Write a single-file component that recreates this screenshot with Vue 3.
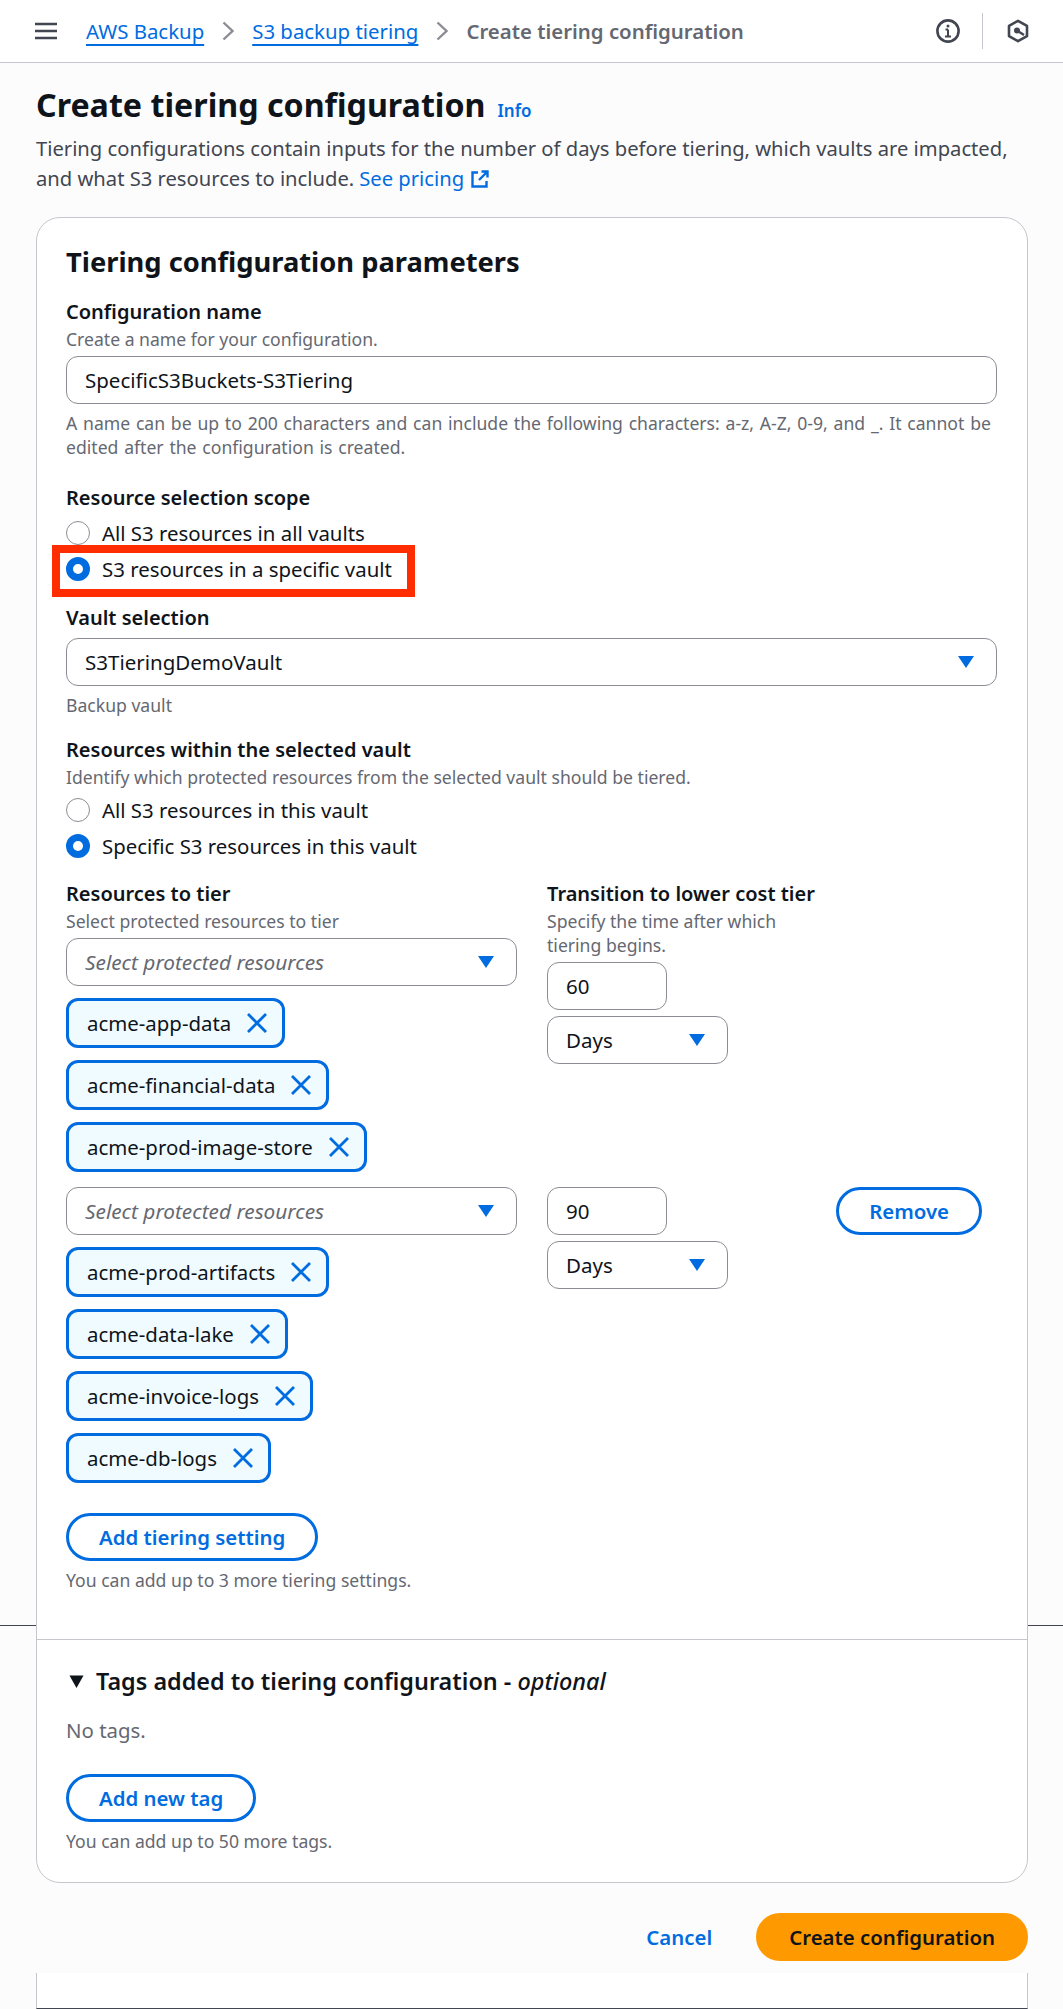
<script setup>
const firstChips = ["acme-app-data", "acme-financial-data", "acme-prod-image-store"];
const secondChips = ["acme-prod-artifacts", "acme-data-lake", "acme-invoice-logs", "acme-db-logs"];
</script>

<template>
  <div class="page">
    <header class="topbar">
      <svg class="menu" width="22" height="18" viewBox="0 0 22 18">
        <path d="M0 2h22M0 9h22M0 16h22" stroke="#424650" stroke-width="2.6" fill="none" />
      </svg>
      <a class="crumb">AWS Backup</a>
      <svg class="chev" width="12" height="20" viewBox="0 0 12 20"><path d="M1.5 1.5L10.5 10l-9 8.500" stroke="#8c8c94" stroke-width="2.4" fill="none" /></svg>
      <a class="crumb">S3 backup tiering</a>
      <svg class="chev" width="12" height="20" viewBox="0 0 12 20"><path d="M1.5 1.500L10.500 10l-9 8.500" stroke="#8c8c94" stroke-width="2.4" fill="none" /></svg>
      <span class="crumb-current">Create tiering configuration</span>
      <div class="topbar-icons">
        <svg width="24" height="24" viewBox="0 0 24 24">
          <circle cx="12" cy="12" r="10.6" stroke="#424650" stroke-width="2.600" fill="none" />
          <path d="M12 10.500v7M9 17.500h6M9.500 10.500h2.500" stroke="#424650" stroke-width="2" fill="none" />
          <circle cx="12" cy="7" r="1.500" fill="#424650" />
        </svg>
        <span class="topbar-sep"></span>
        <svg width="24" height="24" viewBox="0 0 24 24">
          <path d="M12 1.800l9 5.100v10.200l-9 5.100-9-5.100V6.900z" stroke="#424650" stroke-width="2.600" fill="none" stroke-linejoin="round" />
          <circle cx="11" cy="11.500" r="3" fill="#424650" />
          <path d="M11 11.500l7 4.500" stroke="#424650" stroke-width="2.400" />
        </svg>
      </div>
    </header>

    <main class="content">
      <div class="title-row">
        <h1>Create tiering configuration</h1>
        <a class="info">Info</a>
      </div>
      <div class="intro">
        <p>Tiering configurations contain inputs for the number of days before tiering, which vaults are impacted,</p>
        <p>
          <span>and what S3 resources to include.</span>
          <a class="link">See pricing
            <svg width="18" height="18" viewBox="0 0 18 18"><path d="M7 2.500H1.500v14h14V11M10.500 1.500h6v6M16.500 1.500L8 10" stroke="#006ce0" stroke-width="2.400" fill="none" /></svg>
          </a>
        </p>
      </div>

      <div class="rule"></div>

      <section class="card">
        <div class="card-main">
          <h2>Tiering configuration parameters</h2>

          <div class="field name">
            <label>Configuration name</label>
            <p class="desc">Create a name for your configuration.</p>
            <div class="input">SpecificS3Buckets-S3Tiering</div>
            <p class="hint spaced">A name can be up to 200 characters and can include the following characters: a-z, A-Z, 0-9, and _. It cannot be edited after the configuration is created.</p>
          </div>

          <div class="field scope">
            <label>Resource selection scope</label>
            <div class="radios">
              <div class="radio"><span class="dot"></span>All S3 resources in all vaults</div>
              <div class="radio">
                <span class="dot on"></span>S3 resources in a specific vault
                <span class="callout"></span>
              </div>
            </div>
          </div>

          <div class="field vault">
            <label>Vault selection</label>
            <div class="input select tight">S3TieringDemoVault<span class="caret"></span></div>
            <p class="hint">Backup vault</p>
          </div>

          <div class="field within">
            <label>Resources within the selected vault</label>
            <p class="desc">Identify which protected resources from the selected vault should be tiered.</p>
            <div class="radios">
              <div class="radio"><span class="dot"></span>All S3 resources in this vault</div>
              <div class="radio"><span class="dot on"></span>Specific S3 resources in this vault</div>
            </div>
          </div>

          <div class="tier-row first">
            <div class="tier-left">
              <label>Resources to tier</label>
              <p class="desc">Select protected resources to tier</p>
              <div class="input select placeholder">Select protected resources<span class="caret"></span></div>
              <div v-for="c in firstChips" :key="c" class="chip">
                {{ c }}
                <svg width="20" height="20" viewBox="0 0 20 20"><path d="M1 1l18 18M19 1L1 19" stroke="#006ce0" stroke-width="2.800" /></svg>
              </div>
            </div>
            <div class="tier-right">
              <label>Transition to lower cost tier</label>
              <p class="desc narrow">Specify the time after which tiering begins.</p>
              <div class="input num">60</div>
              <div class="input select days">Days<span class="caret"></span></div>
            </div>
          </div>

          <div class="tier-row second">
            <div class="tier-left">
              <div class="input select placeholder flush">Select protected resources<span class="caret"></span></div>
              <div v-for="c in secondChips" :key="c" class="chip">
                {{ c }}
                <svg width="20" height="20" viewBox="0 0 20 20"><path d="M1 1l18 18M19 1L1 19" stroke="#006ce0" stroke-width="2.800" /></svg>
              </div>
            </div>
            <div class="tier-right">
              <div class="input num flush">90</div>
              <div class="input select days">Days<span class="caret"></span></div>
            </div>
            <button class="btn remove">Remove</button>
          </div>

          <button class="btn add-setting">Add tiering setting</button>
          <p class="hint">You can add up to 3 more tiering settings.</p>
        </div>

        <div class="card-tags">
          <div class="tags-head">
            <svg width="15" height="13" viewBox="0 0 15 13"><path d="M0.500 0.500h14L7.500 13z" fill="#0f141a" /></svg>
            <span>Tags added to tiering configuration - <em>optional</em></span>
          </div>
          <p class="no-tags">No tags.</p>
          <button class="btn">Add new tag</button>
          <p class="hint">You can add up to 50 more tags.</p>
        </div>
      </section>

      <div class="actions">
        <a class="cancel">Cancel</a>
        <button class="btn primary">Create configuration</button>
      </div>

      <div class="next-card"></div>
    </main>
  </div>
</template>

<style>
  body {
    margin: 0;
    background: #fcfcfd;
  }
</style>

<style scoped>
  .page {
    font-family: "Noto Sans", "Open Sans", sans-serif;
    font-size: 20.4px;
    line-height: 24px;
    color: #0f141a;
    height: 2009px;
    overflow: hidden;
  }

  .topbar {
    display: flex;
    align-items: center;
    height: 62px;
    padding: 0 33px 0 35px;
    background: #fff;
    border-bottom: 1px solid #c6c6cd;
  }

  .menu {
    margin-right: 29px;
  }

  .crumb {
    color: #006ce0;
    text-decoration: underline;
    text-decoration-thickness: 2px;
    text-underline-offset: 5px;
    text-decoration-skip-ink: none;
  }

  .chev {
    margin: 0 18px;
  }

  .crumb-current {
    color: #656871;
    font-weight: 600;
  }

  .topbar-icons {
    margin-left: auto;
    display: flex;
    align-items: center;
  }

  .topbar-sep {
    width: 1px;
    height: 36px;
    background: #c6c6cd;
    margin: 0 23px 0 22px;
  }

  .content {
    position: relative;
    background: #fcfcfd;
    padding: 23px 35px 0 36px;
  }

  .title-row {
    display: flex;
    align-items: baseline;
    gap: 12px;
  }

  h1 {
    margin: 0;
    font-size: 32.200px;
    line-height: 38px;
    font-weight: 700;
  }

  .info {
    color: #006ce0;
    font-size: 17px;
    font-weight: 600;
  }

  .intro {
    margin: 9px 0 0;
    font-size: 20.200px;
    line-height: 30px;
    color: #424650;
  }

  .intro p {
    margin: 0;
  }

  .link {
    margin-left: 5px;
    color: #006ce0;
    white-space: nowrap;
  }

  .link svg {
    vertical-align: -2px;
    margin-left: 2px;
  }

  .rule {
    position: absolute;
    left: 0;
    right: 0;
    top: 1562px;
    height: 1px;
    background: #424650;
  }

  .card {
    position: relative;
    margin-top: 24px;
    background: #fff;
    border: 1px solid #c6c6cd;
    border-radius: 24px;
  }

  .card-main {
    padding: 26px 30px 47px 29px;
  }

  h2 {
    margin: 0;
    font-size: 27.300px;
    line-height: 36px;
    font-weight: 700;
  }

  label {
    display: block;
    font-size: 20px;
    line-height: 28px;
    font-weight: 600;
  }

  .desc,
  .hint {
    margin: 0;
    font-size: 17.600px;
    line-height: 24px;
    color: #656871;
  }

  .desc {
    margin-top: 1px;
  }

  .narrow {
    width: 270px;
  }

  .hint {
    margin-top: 7px;
  }

  .spaced {
    word-spacing: 1.200px;
  }

  .name {
    margin-top: 18px;
  }

  .scope {
    margin-top: 25px;
  }

  .vault {
    margin-top: 17px;
  }

  .within {
    margin-top: 19px;
  }

  .input {
    position: relative;
    box-sizing: border-box;
    height: 48px;
    display: flex;
    align-items: center;
    padding: 0 18px;
    border: 1px solid #8c8c94;
    border-radius: 12px;
    background: #fff;
    margin-top: 5px;
    font-size: 20.500px;
  }

  .tight {
    margin-top: 6px;
  }

  .flush {
    margin-top: 0;
  }

  .caret {
    position: absolute;
    right: 22px;
    top: 17px;
    width: 0;
    height: 0;
    border-left: 8px solid transparent;
    border-right: 8px solid transparent;
    border-top: 12px solid #006ce0;
  }

  .radios {
    margin-top: 3px;
  }

  .radio {
    position: relative;
    display: flex;
    align-items: center;
    gap: 12px;
    height: 36px;
  }

  .dot {
    box-sizing: border-box;
    width: 24px;
    height: 24px;
    border-radius: 50%;
    border: 1.500px solid #8c8c94;
    background: #fff;
  }

  .dot.on {
    border: 7px solid #006ce0;
  }

  .callout {
    position: absolute;
    left: -14px;
    top: -6px;
    bottom: -10px;
    width: 363px;
    box-sizing: border-box;
    border: 8px solid #ff2d00;
  }

  .tier-row {
    display: flex;
    align-items: flex-start;
    position: relative;
  }

  .first {
    margin-top: 16px;
  }

  .second {
    margin-top: 15px;
  }

  .tier-left {
    width: 451px;
    margin-right: 30px;
  }

  .placeholder {
    color: #656871;
    font-style: italic;
    font-size: 20.800px;
  }

  .chip {
    box-sizing: border-box;
    width: fit-content;
    height: 50px;
    display: flex;
    align-items: center;
    gap: 16px;
    margin-top: 12px;
    padding: 0 15px 0 18px;
    border: 3px solid #006ce0;
    border-radius: 12px;
    background: #f0fbff;
    font-size: 20.400px;
  }

  .num {
    width: 120px;
  }

  .days {
    width: 181px;
    margin-top: 6px;
  }

  .remove {
    position: absolute;
    right: 15px;
    top: 0;
  }

  .btn {
    box-sizing: border-box;
    height: 48px;
    padding: 0 30px;
    border: 3px solid #006ce0;
    border-radius: 24px;
    background: #fff;
    color: #006ce0;
    font-family: inherit;
    font-size: 20.400px;
    font-weight: 600;
  }

  .add-setting {
    margin-top: 30px;
  }

  .card-tags {
    border-top: 1px solid #c6c6cd;
    padding: 25px 30px 29px 29px;
  }

  .tags-head {
    display: flex;
    align-items: center;
    gap: 12px;
    padding-left: 3px;
    font-size: 23.400px;
    font-weight: 600;
    line-height: 32px;
  }

  .tags-head em {
    font-weight: 500;
  }

  .no-tags {
    margin: 21px 0 32px;
    color: #656871;
  }

  .actions {
    display: flex;
    justify-content: flex-end;
    align-items: center;
    gap: 44px;
    margin-top: 30px;
  }

  .cancel {
    color: #006ce0;
    font-weight: 600;
  }

  .primary {
    background: #ff9900;
    border-color: #ff9900;
    color: #0f141a;
  }

  .next-card {
    box-sizing: border-box;
    height: 36px;
    margin-top: 12px;
    background: #fff;
    border-left: 1px solid #c6c6cd;
    border-right: 1px solid #c6c6cd;
    border-bottom: 1px solid #424650;
  }
</style>
